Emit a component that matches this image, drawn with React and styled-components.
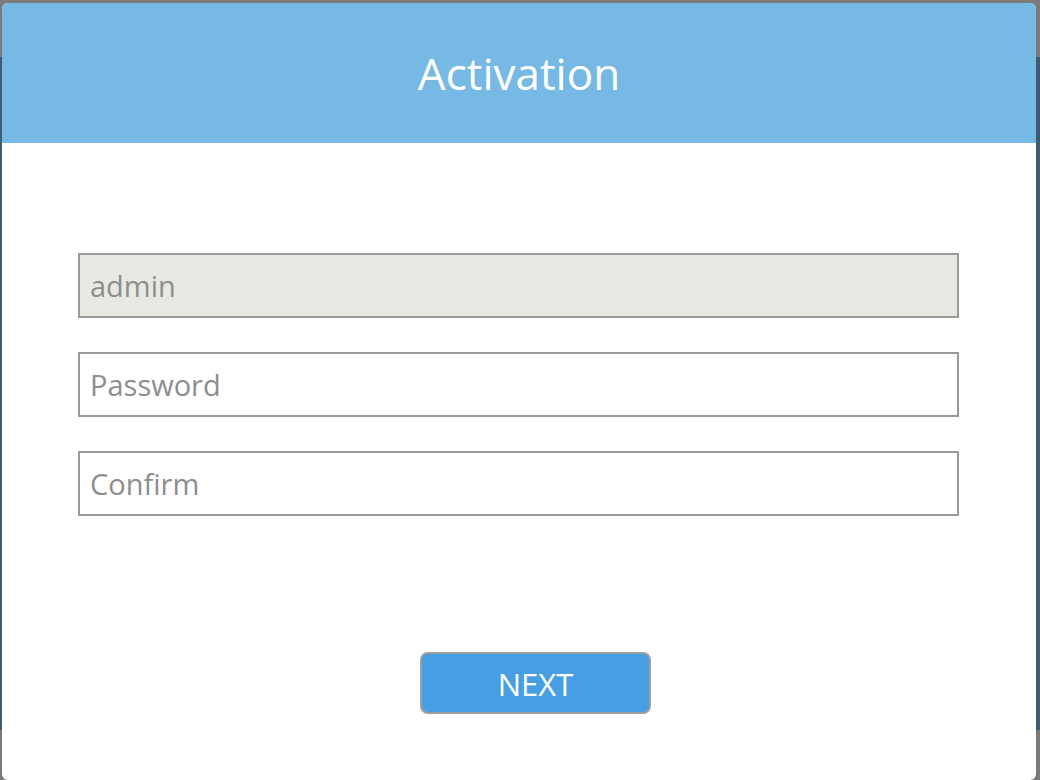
import React from "react";
import styled, { createGlobalStyle } from "styled-components";

const Global = createGlobalStyle`
  html, body { margin: 0; padding: 0; }
  body {
    width: 1040px;
    height: 780px;
    overflow: hidden;
    background: linear-gradient(to bottom, #7b7b7b 0, #7b7b7b 57px, #3f5b6f 57px, #3f5b6f 730px, #7a7a7a 730px);
    font-family: "Open Sans", "Noto Sans", sans-serif;
  }
  #root { width: 1040px; height: 780px; }
`;

const Stage = styled.div`
  width: 1040px;
  height: 780px;
  padding: 3px 4px 0 2px;
  box-sizing: border-box;
`;

const Dialog = styled.div`
  width: 1034px;
  height: 777px;
  background: #ffffff;
  border-radius: 6px;
  overflow: hidden;
  display: flex;
  flex-direction: column;
`;

const Header = styled.header`
  height: 140px;
  background: #76b9e4;
  display: flex;
  align-items: center;
  justify-content: center;
  padding-bottom: 0;
  box-sizing: border-box;
`;

const Title = styled.h1`
  margin: 0;
  color: #ffffff;
  font-family: "Open Sans", "Noto Sans", sans-serif;
  font-weight: 400;
  font-size: 44px;
  letter-spacing: 0;
`;

const Body = styled.div`
  flex: 1;
  display: flex;
  flex-direction: column;
  align-items: flex-start;
  padding: 110px 0 0 76px;
`;

const Fields = styled.div`
  display: flex;
  flex-direction: column;
  gap: 34px;
`;

const Field = styled.input`
  width: 881px;
  height: 65px;
  box-sizing: border-box;
  border: 2px solid #9a9a9a;
  border-radius: 0;
  background: ${(p) => (p.$disabled ? "#e9e9e4" : "#ffffff")};
  padding: 0 10px;
  font-family: "Open Sans", "Noto Sans", sans-serif;
  font-size: 29px;
  color: #8e8e8e;
  outline: none;
  &::placeholder { color: #8e8e8e; opacity: 1; }
`;

const Footer = styled.div`
  align-self: stretch;
  display: flex;
  justify-content: flex-start;
  padding: 136px 0 0 342px;
`;

const NextButton = styled.button`
  width: 231px;
  height: 62px;
  box-sizing: border-box;
  background: #479fe3;
  border: 2px solid #9e9e9e;
  border-radius: 8px;
  color: #ffffff;
  font-family: "Open Sans", "Noto Sans", sans-serif;
  font-size: 31px;
  font-weight: 400;
  padding: 2px 0 0;
  cursor: pointer;
`;

export default function App() {
  return (
    <>
      <Global />
      <Stage>
        <Dialog>
          <Header>
            <Title>Activation</Title>
          </Header>
          <Body>
            <Fields>
              <Field $disabled value="admin" readOnly />
              <Field placeholder="Password" type="password" />
              <Field placeholder="Confirm" type="password" />
            </Fields>
            <Footer>
              <NextButton>NEXT</NextButton>
            </Footer>
          </Body>
        </Dialog>
      </Stage>
    </>
  );
}
